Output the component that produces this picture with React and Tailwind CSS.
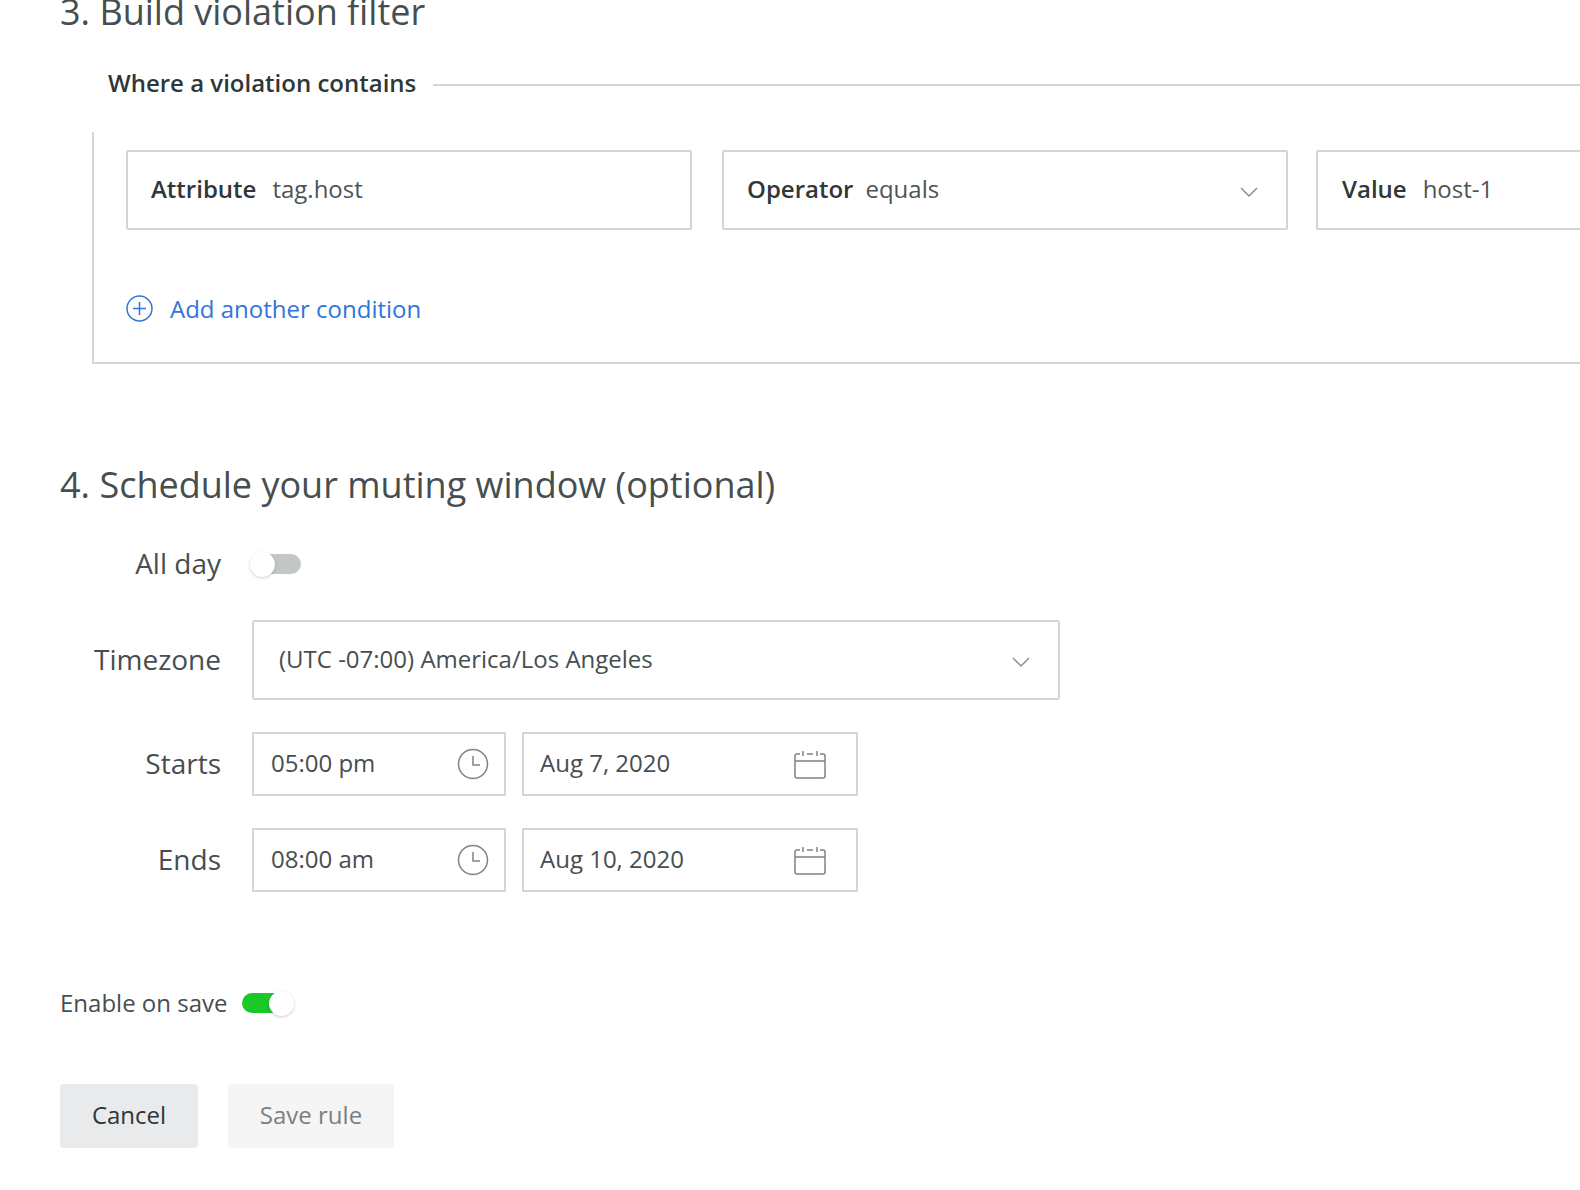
import React from "react";

const Chevron = () => (
  <svg width="18" height="12" viewBox="0 0 18 12" fill="none" stroke="#8a9092" strokeWidth="1.5">
    <path d="M1 2l8 8 8-8" />
  </svg>
);

const Clock = () => (
  <svg width="32" height="32" viewBox="0 0 32 32" fill="none" stroke="#7c8385" strokeWidth="1.5">
    <circle cx="16" cy="16" r="14.5" />
    <path d="M16 8v9h7" />
  </svg>
);

const Calendar = () => (
  <svg width="32" height="29" viewBox="0 0 32 29" fill="none" stroke="#7c8385" strokeWidth="1.5">
    <path d="M6 4H3a2 2 0 0 0-2 2v20a2 2 0 0 0 2 2h26a2 2 0 0 0 2-2V6a2 2 0 0 0-2-2h-3" />
    <path d="M1 11h30M9 1v5M23 1v5M13 4h6" />
  </svg>
);

const PlusCircle = () => (
  <svg width="27" height="27" viewBox="0 0 27 27" fill="none" stroke="#2f76d9" strokeWidth="1.5">
    <circle cx="13.5" cy="13.5" r="12.5" />
    <path d="M13.5 7v13M7 13.5h13" />
  </svg>
);

const Field = ({ label, value, chevron, className, valueClass }) => (
  <div className={`flex h-[80px] shrink-0 items-center rounded-[2px] border-2 border-[#d4d6d6] pl-[23px] pr-[28px] ${className}`}>
    <span className="mb-[2px] font-semibold text-[#2f3738]">{label}</span>
    <span className={`mb-[2px] text-[#4c5455] ${valueClass}`}>{value}</span>
    {chevron && (
      <span className="ml-auto mt-[4px]">
        <Chevron />
      </span>
    )}
  </div>
);

const PickerRow = ({ label, time, date, className }) => (
  <div className={`flex items-center ${className}`}>
    <span className="mb-[2px] w-[161px] text-right text-[28px] text-[#464e4f]">{label}</span>
    <div className="ml-[31px] flex h-[64px] w-[254px] items-center justify-between border-2 border-[#d4d6d6] pl-[17px] pr-[15px] text-[#464e4f]">
      <span className="mb-[2px]">{time}</span>
      <Clock />
    </div>
    <div className="ml-[16px] flex h-[64px] w-[336px] items-center justify-between border-2 border-[#d4d6d6] pl-[16px] pr-[30px] text-[#464e4f]">
      <span className="mb-[2px]">{date}</span>
      <Calendar />
    </div>
  </div>
);

export default function App() {
  return (
    <div className="h-[1190px] w-[1580px] overflow-hidden bg-white pl-[60px] font-['Open_Sans',sans-serif] text-[24px] leading-[34px]">
      <h2 className="-mt-[12px] h-[48px] text-[36px] leading-[48px] text-[#464e4f]">3. Build violation filter</h2>

      <div className="ml-[48px] mt-[30px] flex items-center">
        <span className="shrink-0 whitespace-nowrap font-semibold text-[#2f3738]">Where a violation contains</span>
        <div className="ml-[17px] mt-[3px] h-[2px] w-[1200px] shrink-0 bg-[#d4d6d6]" />
      </div>

      <div className="ml-[32px] mt-[32px] h-[232px] w-[1600px] border-b-2 border-l-2 border-[#d4d6d6] pl-[32px] pt-[18px]">
        <div className="flex">
          <Field label="Attribute" value="tag.host" valueClass="ml-[16px]" className="w-[566px]" />
          <Field label="Operator" value="equals" valueClass="ml-[12px]" chevron className="ml-[30px] w-[566px]" />
          <Field label="Value" value="host-1" valueClass="ml-[16px]" className="ml-[28px] w-[400px] pl-[24px]" />
        </div>
        <div className="mt-[62px] flex items-center">
          <span className="mb-[3px] flex">
            <PlusCircle />
          </span>
          <a className="ml-[17px] mb-[1px] text-[#2f76d9]">Add another condition</a>
        </div>
      </div>

      <h2 className="mt-[97px] h-[48px] text-[36px] leading-[48px] text-[#464e4f]">4. Schedule your muting window (optional)</h2>

      <div className="mt-[38px] flex h-[34px] items-center">
        <span className="mb-[2px] w-[161px] text-right text-[28px] text-[#464e4f]">All day</span>
        <div className="relative ml-[31px] h-[20px] w-[49px] rounded-full bg-[#c4c7c8]">
          <div className="absolute -top-[2px] -left-[2px] h-[25px] w-[25px] rounded-full bg-white shadow-[0_1px_3px_rgba(0,0,0,0.2)]" />
        </div>
      </div>

      <div className="mt-[39px] flex items-center">
        <span className="mb-[2px] w-[161px] text-right text-[28px] text-[#464e4f]">Timezone</span>
        <div className="ml-[31px] flex h-[80px] w-[808px] items-center justify-between rounded-[2px] border-2 border-[#d4d6d6] pl-[25px] pr-[28px] text-[#464e4f]">
          <span className="mb-[2px]">(UTC -07:00) America/Los Angeles</span>
          <span className="mt-[4px]">
            <Chevron />
          </span>
        </div>
      </div>

      <PickerRow label="Starts" time="05:00 pm" date="Aug 7, 2020" className="mt-[32px]" />
      <PickerRow label="Ends" time="08:00 am" date="Aug 10, 2020" className="mt-[32px]" />

      <div className="mt-[94px] flex h-[34px] items-center text-[#464e4f]">
        <span>Enable on save</span>
        <div className="relative ml-[15px] h-[20px] w-[49px] rounded-full bg-[#1ac928]">
          <div className="absolute -top-[2px] -right-[3px] h-[25px] w-[25px] rounded-full bg-white shadow-[0_1px_3px_rgba(0,0,0,0.2)]" />
        </div>
      </div>

      <div className="mt-[64px] flex">
        <button className="h-[64px] w-[138px] rounded-[4px] bg-[#e9eaec] pb-[2px] text-[#2e3637]">Cancel</button>
        <button className="ml-[30px] h-[64px] w-[166px] rounded-[4px] bg-[#f5f5f6] pb-[2px] text-[#7a8082]">Save rule</button>
      </div>
    </div>
  );
}
